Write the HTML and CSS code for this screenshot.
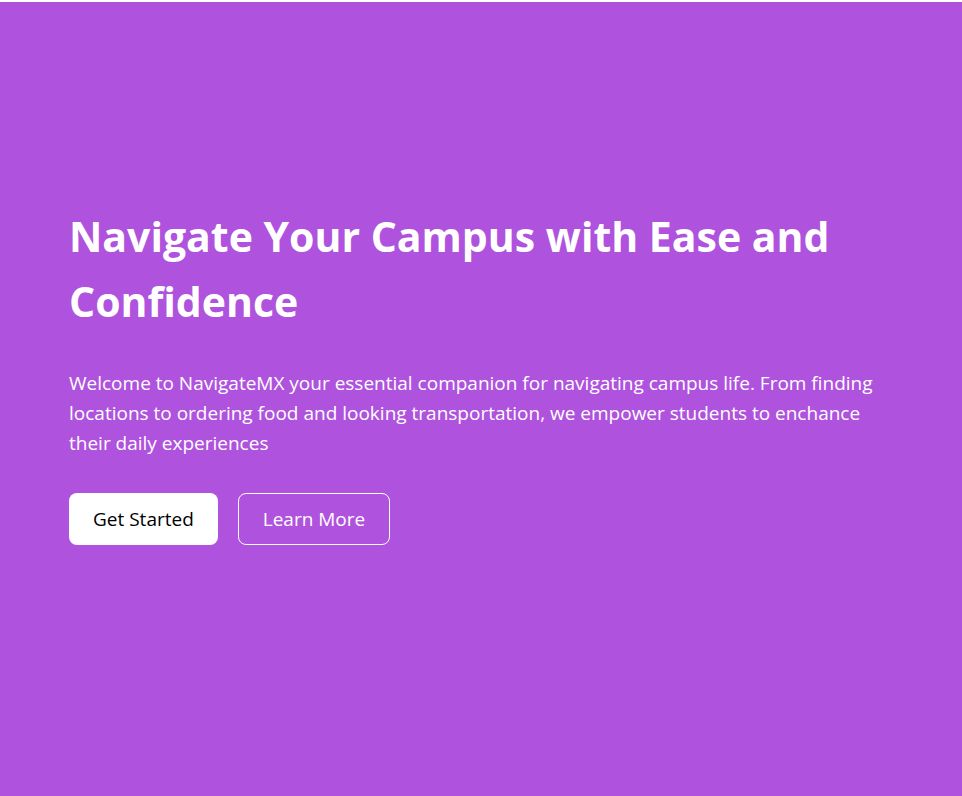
FILE: index.html
```html
<!DOCTYPE html>
<html lang="en">
<head>
<meta charset="utf-8">
<title>NavigateMX</title>
<link rel="stylesheet" href="styles.css">
</head>
<body>
<section class="hero">
  <div class="hero-inner">
    <h1 class="hero-title">Navigate Your Campus with Ease and Confidence</h1>
    <p class="hero-text">Welcome to NavigateMX your essential companion for navigating campus life. From finding locations to ordering food and looking transportation, we empower students to enchance their daily experiences</p>
    <div class="hero-actions">
      <a class="btn btn-primary" href="#">Get Started</a>
      <a class="btn btn-outline" href="#">Learn More</a>
    </div>
  </div>
</section>
</body>
</html>
```
FILE: styles.css
```css
html, body {
  margin: 0;
  padding: 0;
  background: #ffffff;
}
body {
  font-family: "Open Sans", "Noto Sans", sans-serif;
  padding-top: 2px;
}
.hero {
  background: #af52de;
  height: 794px;
  box-sizing: border-box;
  padding: 202px 69px 0 69px;
  color: #ffffff;
}
.hero-inner {
  width: 830px;
}
.hero-title {
  margin: 0;
  font-size: 41px;
  line-height: 65px;
  font-weight: 700;
}
.hero-text {
  margin: 34px 0 0 0;
  font-size: 19px;
  line-height: 30px;
}
.hero-actions {
  display: flex;
  gap: 20px;
  margin-top: 35px;
}
.btn {
  display: inline-flex;
  align-items: center;
  justify-content: center;
  height: 52px;
  box-sizing: border-box;
  padding: 0 24px;
  border-radius: 8px;
  font-size: 19px;
  text-decoration: none;
}
.btn-primary {
  background: #ffffff;
  color: #000000;
}
.btn-outline {
  border: 1px solid #ffffff;
  color: #ffffff;
}
```
